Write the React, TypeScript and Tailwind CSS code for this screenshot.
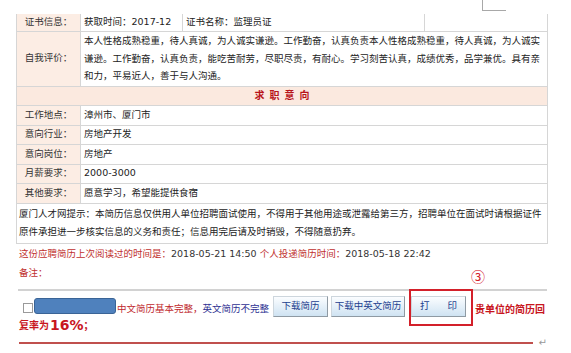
import React from "react";

const LABEL = "bg-[#fcede4] text-center border border-[#d6d6d6] text-[#333]";
const VALUE = "pl-[3px] border border-[#d6d6d6] text-[#222] whitespace-nowrap";

const rows = [
  { label: "工作地点：", value: "漳州市、厦门市", h: "h-[20px]" },
  { label: "意向行业：", value: "房地产开发", h: "h-[19px]" },
  { label: "意向岗位：", value: "房地产", h: "h-[20px]" },
  { label: "月薪要求：", value: "2000-3000", h: "h-[19px]" },
  { label: "其他要求：", value: "愿意学习，希望能提供食宿", h: "h-[20px]" },
];

const Btn = ({ children, className }: { children: React.ReactNode; className?: string }) => (
  <button
    className={
      "h-[21px] flex items-center text-[9.5px] text-[#1d3f8f] bg-gradient-to-b from-[#fbfdff] to-[#cfe3f2] border border-[#cdd6dd] border-r-[#8f9aa3] border-b-[#8f9aa3] " +
      (className || "")
    }
  >
    {children}
  </button>
);

const App = () => {
  return (
    <div className="relative w-[571px] h-[353px] bg-white overflow-hidden font-['DejaVu_Sans','Noto_Sans_CJK_SC',sans-serif] text-[9.5px] text-[#333]">
      {/* page corner mark */}
      <div className="absolute left-[482px] top-0 w-[24px] h-[11px] border-l border-b border-[#a8a8a8]"></div>

      <div className="pl-[16px] pt-[14px] w-[547px]">
        <table className="w-[531px] table-fixed border-collapse">
          <colgroup>
            <col className="w-[64px]" />
            <col className="w-[102px]" />
            <col className="w-[242px]" />
            <col className="w-[123px]" />
          </colgroup>
          <tbody>
            <tr className="h-[17px]">
              <td className={LABEL + " border-t-0"}>证书信息：</td>
              <td className={VALUE + " border-t-0"}>获取时间：2017-12</td>
              <td className={VALUE + " border-t-0"}>证书名称：监理员证</td>
              <td className="border border-t-0 border-[#d6d6d6]"></td>
            </tr>
            <tr className="h-[55px]">
              <td className={LABEL}>自我评价：</td>
              <td colSpan={3} className={VALUE + " leading-[17.5px]"}>
                本人性格成熟稳重，待人真诚，为人诚实谦逊。工作勤奋，认真负责本人性格成熟稳重，待人真诚，为人诚实
                <br />
                谦逊。工作勤奋，认真负责，能吃苦耐劳，尽职尽责，有耐心。学习刻苦认真，成绩优秀，品学兼优。具有亲
                <br />
                和力，平易近人，善于与人沟通。
              </td>
            </tr>
            <tr className="h-[19px]">
              <td
                colSpan={4}
                className="bg-[#fbe9df] border border-[#d6d6d6] text-center text-[10px] font-bold text-[#b8141a] tracking-[5px] pl-[5px]"
              >
                求职意向
              </td>
            </tr>
            {rows.map((r) => (
              <tr key={r.label} className={r.h}>
                <td className={LABEL}>{r.label}</td>
                <td colSpan={3} className={VALUE}>
                  {r.value}
                </td>
              </tr>
            ))}
            <tr className="h-[40px]">
              <td colSpan={4} className="pl-[2px] border border-[#d6d6d6] text-[#222] leading-[18px] whitespace-nowrap">
                厦门人才网提示：本简历信息仅供用人单位招聘面试使用，不得用于其他用途或泄露给第三方，招聘单位在面试时请根据证件
                <br />
                原件承担进一步核实信息的义务和责任；信息用完后请及时销毁，不得随意扔弃。
              </td>
            </tr>
          </tbody>
        </table>

        <div className="pl-[3px] h-[19px] leading-[19px] whitespace-nowrap">
          <span className="text-[#c0302e]">这份应聘简历上次阅读过的时间是：</span>
          <span className="text-[#333]">2018-05-21 14:50 </span>
          <span className="text-[#c0302e]">个人投递简历时间：</span>
          <span className="text-[#333]">2018-05-18 22:42</span>
        </div>
        <div className="pl-[3px] h-[19px] leading-[19px] text-[#c0302e]">备注：</div>

        <div className="mt-[7px] ml-[2px] h-[2px] bg-[#d2d2d2]"></div>

        {/* action row */}
        <div className="mt-[5px] flex items-center whitespace-nowrap">
          <span className="ml-[7px] mt-[4px] w-[10px] h-[10px] border border-[#9a9a9a] bg-white"></span>
          <span className="ml-[1px] w-[82px] h-[16px] rounded-[3px] bg-[#4f81bd] border border-[#3a6496]"></span>
          <span className="ml-[1px] mt-[6px]">
            <span className="text-[#c0282d]">中文简历基本完整，</span>
            <span className="text-[#2e3192]">英文简历不完整</span>
          </span>
          <Btn className="ml-[4px] w-[55px] justify-center">下载简历</Btn>
          <Btn className="ml-[3px] w-[74px] justify-center">下载中英文简历</Btn>
          <div className="relative ml-[6px]">
            <Btn className="w-[55px] justify-between px-[8px]">
              <span>打</span>
              <span>印</span>
            </Btn>
            {/* annotation */}
            <div className="absolute left-[-2px] top-[-7px] w-[64px] h-[37px] border-2 border-[#d3202a]"></div>
            <div className="absolute left-[60px] top-[-27px] text-[14px] leading-none text-[#d3202a] font-['Noto_Sans_CJK_SC','DejaVu_Sans',sans-serif]">
              ③
            </div>
          </div>
          <span className="ml-[9px] mt-[6px] text-[10px] font-bold text-[#c8161e]">贵单位的简历回</span>
        </div>

        <div className="pl-[3px] h-[18px] flex items-center font-bold text-[#c8161e] text-[10px]">
          <span>复率为</span>
          <span className="text-[14px] ml-[1px]">16%</span>
          <span>；</span>
        </div>

        <div className="mt-[3px] flex items-center">
          <div className="ml-[3px] w-[528px] h-[2px] bg-[#c0504d]"></div>
          <span className="ml-[6px] text-[10px] text-[#999] leading-none">↵</span>
        </div>
      </div>
    </div>
  );
};

export default App;
